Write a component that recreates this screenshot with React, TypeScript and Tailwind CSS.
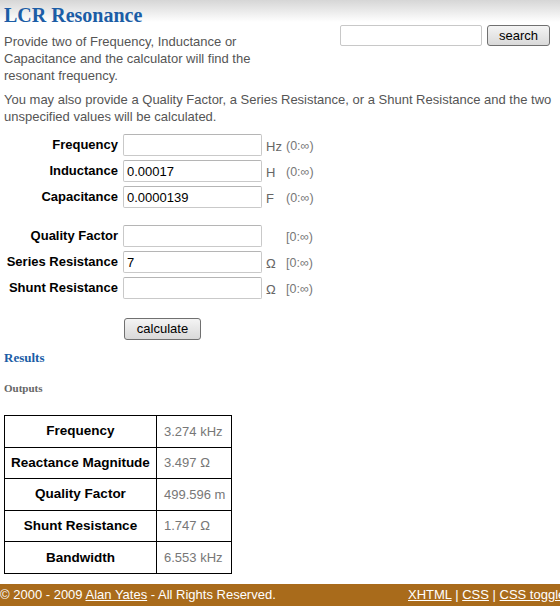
const fields = [
  { label: "Frequency", value: "", unit: "Hz", range: "(0:∞)" },
  { label: "Inductance", value: "0.00017", unit: "H", range: "(0:∞)" },
  { label: "Capacitance", value: "0.0000139", unit: "F", range: "(0:∞)" },
];

const extras = [
  { label: "Quality Factor", value: "", unit: "", range: "[0:∞)" },
  { label: "Series Resistance", value: "7", unit: "Ω", range: "[0:∞)" },
  { label: "Shunt Resistance", value: "", unit: "Ω", range: "[0:∞)" },
];

const outputs = [
  { name: "Frequency", value: "3.274 kHz" },
  { name: "Reactance Magnitude", value: "3.497 Ω" },
  { name: "Quality Factor", value: "499.596 m" },
  { name: "Shunt Resistance", value: "1.747 Ω" },
  { name: "Bandwidth", value: "6.553 kHz" },
];

const sans = "font-['Liberation_Sans',Arial,sans-serif]";
const serif = "font-['Liberation_Serif','Times_New_Roman',serif]";

function FieldRow({ f }: { f: { label: string; value: string; unit: string; range: string } }) {
  return (
    <div className="flex items-center h-[22px]">
      <label className={`w-[122px] pr-[4px] text-right text-[13px] font-bold text-black whitespace-nowrap ${sans}`}>
        {f.label}
      </label>
      <input
        readOnly
        value={f.value}
        className={`w-[139px] h-[22px] ml-[1px] px-[3px] border border-[#c9c9c9] border-t-[#b5b5b5] rounded-[2px] bg-white text-[13px] text-black outline-none ${sans}`}
      />
      <span className={`w-[20px] ml-[4px] pt-[3px] text-[13px] text-[#666] ${sans}`}>{f.unit}</span>
      <span className={`pt-[3px] text-[12.5px] text-[#777] ${sans}`}>{f.range}</span>
    </div>
  );
}

export default function App() {
  return (
    <div className={`w-[560px] h-[606px] overflow-hidden bg-white flex flex-col ${sans}`}>
      <div className="bg-gradient-to-b from-[#d6d6d6] to-white to-[22px]">
        <div className="flex justify-between pl-[4px] pr-[10px]">
          <div className="w-[270px]">
            <h1 className={`pt-[3px] text-[20px] leading-[24px] font-bold text-[#1b5da6] ${serif}`}>LCR Resonance</h1>
            <p className="mt-[6px] text-[13px] leading-[17px] text-[#555]">
              Provide two of Frequency, Inductance or Capacitance and the calculator will find the resonant frequency.
            </p>
          </div>
          <div className="flex items-start gap-[5px] pt-[25px]">
            <input readOnly className="w-[142px] h-[21px] border border-[#c8c8c8] rounded-[2px] bg-white outline-none" />
            <button className="w-[63px] h-[21px] border border-[#707070] rounded-[3px] bg-gradient-to-b from-[#f4f4f4] to-[#d9d9d9] text-[13px] leading-[18px] text-black">
              search
            </button>
          </div>
        </div>
      </div>

      <p className="px-[4px] mt-[7px] text-[13px] leading-[17px] text-[#555]">
        You may also provide a Quality Factor, a Series Resistance, or a Shunt Resistance and the two unspecified values will be calculated.
      </p>

      <div className="mt-[9px] flex flex-col gap-[4px]">
        {fields.map((f) => (
          <FieldRow key={f.label} f={f} />
        ))}
      </div>
      <div className="mt-[17px] flex flex-col gap-[4px]">
        {extras.map((f) => (
          <FieldRow key={f.label} f={f} />
        ))}
      </div>

      <div className="mt-[17px] pl-[124px]">
        <button className="w-[77px] h-[22px] border border-[#707070] rounded-[3px] bg-gradient-to-b from-[#f4f4f4] to-[#d9d9d9] text-[13px] leading-[18px] text-black">
          calculate
        </button>
      </div>

      <h2 className={`mt-[10px] px-[4px] text-[13px] leading-[16px] font-bold text-[#1b5da6] ${serif}`}>Results</h2>
      <h3 className={`mt-[15px] px-[4px] text-[11px] leading-[14px] font-bold text-[#666] ${serif}`}>Outputs</h3>

      <table className="mt-[20px] ml-[4px] w-[228px] border-collapse border border-black">
        <tbody>
          {outputs.map((o) => (
            <tr key={o.name} className="h-[31.6px]">
              <td className="w-[152px] border border-black text-center text-[13.5px] font-bold text-black whitespace-nowrap">{o.name}</td>
              <td className="border border-black pl-[7px] text-[13px] text-[#777] whitespace-nowrap">{o.value}</td>
            </tr>
          ))}
        </tbody>
      </table>

      <div className="mt-auto h-[22px] bg-[#a96b1b] flex items-center text-[13px] text-white whitespace-nowrap">
        <span className="w-[408px] shrink-0">
          © 2000 - 2009 <a className="underline">Alan Yates</a> - All Rights Reserved.
        </span>
        <span className="shrink-0">
          <a className="underline">XHTML</a> | <a className="underline">CSS</a> | <a className="underline">CSS toggle</a>
        </span>
      </div>
    </div>
  );
}
